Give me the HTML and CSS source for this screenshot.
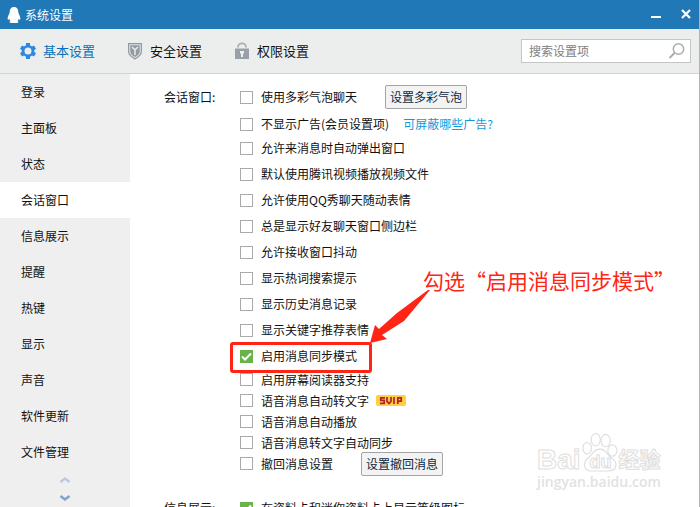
FILE: index.html
```html
<!DOCTYPE html>
<html lang="zh-CN">
<head>
<meta charset="utf-8">
<title>系统设置</title>
<link rel="stylesheet" href="styles.css">
</head>
<body>
<div class="window">
  <header class="titlebar">
    <svg class="penguin" width="14" height="18" viewBox="0 0 14 18"><path fill="#fff" d="M7 1C4 1 2.700 3 2.700 6C2.700 8 .6 10 .6 12.500C.6 14 1.500 14 2.300 12.800C2.500 14 3 14.600 3.500 15C2 15.500 2.300 17 4.500 17H9.500C11.700 17 12 15.500 10.500 15C11 14.600 11.500 14 11.700 12.800C12.500 14 13.400 14 13.400 12.500C13.400 10 11.300 8 11.300 6C11.300 3 10 1 7 1Z"/></svg>
    <h1>系统设置</h1>
    <div class="controls">
      <button type="button" aria-label="最小化"><svg width="10" height="12" viewBox="0 0 10 12"><path fill="#fff" d="M0 7h10v2H0z"/></svg></button>
      <button type="button" aria-label="关闭"><svg width="10" height="12" viewBox="0 0 10 12"><path stroke="#fff" stroke-width="2.200" d="M1 1l8 8M9 1l-8 8"/></svg></button>
    </div>
  </header>
  <nav class="toolbar">
    <a class="tab current" href="#basic"><svg width="18" height="18" viewBox="0 0 18 18"><path fill="#2b87e0" fill-rule="evenodd" d="M7 1h4v2.300l2 1.200 2-1 2 3.300-1.700 1.200v2l1.700 1.200-2 3.300-2-1-2 1.200V17H7v-2.300l-2-1.200-2 1-2-3.300L2.700 10V8L1 6.800l2-3.300 2 1 2-1.200zM9 5.500a3.500 3.500 0 1 0 0 7 3.500 3.500 0 0 0 0-7z"/></svg>基本设置</a>
    <a class="tab" href="#safety"><svg width="18" height="18" viewBox="0 0 18 18"><path fill="#dfe2e4" stroke="#939ba2" stroke-width="1.200" d="M2.600 1.600h12.800v8c0 3.200-3.200 5.600-6.400 7.300-3.200-1.700-6.400-4.100-6.400-7.300z"/><path fill="#939ba2" d="M4.300 3.200h9.400v6.200c0 2.500-2.300 4.200-4.700 5.500-2.400-1.300-4.700-3-4.700-5.500z"/><path stroke="#e5e8ea" stroke-width="1.600" fill="none" d="M6 5l3 2.800L12 5M9 7.500V13"/></svg>安全设置</a>
    <a class="tab" href="#rights"><svg width="18" height="18" viewBox="0 0 18 18"><path fill="none" stroke="#a9afb5" stroke-width="1.700" d="M5 5.500V5.300a4 4 0 0 1 8 0v.2"/><path fill="#98a1a9" d="M2 6.500h14V17H2z"/><path fill="#eef0f0" d="M7 9h4v2.500h-1V15H8v-3.500H7z"/></svg>权限设置</a>
    <form class="search" role="search">
      <input type="text" aria-label="搜索设置项" placeholder="搜索设置项">
      <button type="button" aria-label="搜索"><svg width="18" height="18" viewBox="0 0 18 18"><circle cx="10.500" cy="7" r="5.200" fill="none" stroke="#acacac" stroke-width="1.500"/><path stroke="#acacac" stroke-width="2" d="M6.500 11l-5 5"/></svg></button>
    </form>
  </nav>
  <div class="body">
    <aside class="sidebar">
      <a href="#login">登录</a>
      <a href="#panel">主面板</a>
      <a href="#status">状态</a>
      <a class="active" href="#chat">会话窗口</a>
      <a href="#info">信息展示</a>
      <a href="#remind">提醒</a>
      <a href="#hotkey">热键</a>
      <a href="#display">显示</a>
      <a href="#sound">声音</a>
      <a href="#update">软件更新</a>
      <a href="#files">文件管理</a>
      <div class="scrollers">
        <button type="button" aria-label="向上"><svg width="12" height="8" viewBox="0 0 12 8"><path fill="none" stroke="#b9cae2" stroke-width="2.400" d="M1.500 6L6 2.500 10.500 6"/></svg></button>
        <button type="button" aria-label="向下"><svg width="12" height="8" viewBox="0 0 12 8"><path fill="none" stroke="#7ea3d2" stroke-width="2.400" d="M1.500 2L6 5.500 10.500 2"/></svg></button>
      </div>
    </aside>
    <main class="content">
      <section class="group">
        <h2>会话窗口:</h2>
        <div class="options">
          <div class="row first"><label><input type="checkbox">使用多彩气泡聊天</label><button class="button" type="button">设置多彩气泡</button></div>
          <div class="row second"><label><input type="checkbox">不显示广告(会员设置项)</label><a class="link" href="#ads">可屏蔽哪些广告?</a></div>
          <div class="row"><label><input type="checkbox">允许来消息时自动弹出窗口</label></div>
          <div class="row"><label><input type="checkbox">默认使用腾讯视频播放视频文件</label></div>
          <div class="row"><label><input type="checkbox">允许使用QQ秀聊天随动表情</label></div>
          <div class="row"><label><input type="checkbox">总是显示好友聊天窗口侧边栏</label></div>
          <div class="row"><label><input type="checkbox">允许接收窗口抖动</label></div>
          <div class="row"><label><input type="checkbox">显示热词搜索提示</label></div>
          <div class="row"><label><input type="checkbox">显示历史消息记录</label></div>
          <div class="row"><label><input type="checkbox">显示关键字推荐表情</label></div>
          <div class="row marked"><label><input type="checkbox" checked>启用消息同步模式</label>
            <div class="mark"></div>
            <svg class="arrow" width="62" height="56" viewBox="0 0 62 56"><path fill="#ff2414" d="M61 2L59 2 28 25 10 41 6 37 1 55 18 51 13 47 35 33Z"/></svg>
            <p class="note">勾选“启用消息同步模式”</p>
          </div>
          <div class="row tight"><label><input type="checkbox">启用屏幕阅读器支持</label></div>
          <div class="row tight"><label><input type="checkbox">语音消息自动转文字</label><svg class="svip" width="30" height="11" viewBox="0 0 30 11" role="img" aria-label="SVIP"><rect width="30" height="11" rx="2" fill="#ffd040"/><path fill="none" stroke="#b5202b" stroke-width="1.700" d="M9 2.800H4.800v2.500h3.400v3H4M11 2v4.300l2 2.200 2-2.200V2M18 2v7M21.800 9V2.800h3.400v3.400h-3.400"/></svg></div>
          <div class="row tight"><label><input type="checkbox">语音消息自动播放</label></div>
          <div class="row tight"><label><input type="checkbox">语音消息转文字自动同步</label></div>
          <div class="row tight"><label><input type="checkbox">撤回消息设置</label><button class="button" type="button">设置撤回消息</button></div>
        </div>
      </section>
      <section class="group">
        <h2>信息展示:</h2>
        <div class="options">
          <div class="row second"><label><input type="checkbox" checked>在资料卡和迷你资料卡上显示等级图标</label></div>
        </div>
      </section>
    </main>
  </div>
  <div class="watermark" aria-hidden="true">
    <div class="brand"><span>Bai</span><span class="paw"><svg width="38" height="42" viewBox="0 0 40 42"><g fill="#fff" stroke="#dedede" stroke-width="1.200"><ellipse cx="6.500" cy="17" rx="4.500" ry="6"/><ellipse cx="15.500" cy="8" rx="4.800" ry="6.500"/><ellipse cx="26" cy="9" rx="4.800" ry="6.500"/><ellipse cx="33" cy="19.500" rx="4.800" ry="6"/><path d="M20 18C13 18 12 24 8 27C1 32 3 41 11 41H29C38 41 39 32 33 28C28 25 27 18 20 18Z"/></g></svg><b>du</b></span><span class="cn">经验</span></div>
    <div class="site">jingyan.baidu.com</div>
  </div>
</div>
</body>
</html>
```
FILE: styles.css
```css
* {
  box-sizing: border-box;
}

body {
  margin: 0;
  font: 12px/18px "Noto Sans CJK SC", sans-serif;
  color: #111;
}

h1, h2, p {
  margin: 0;
  font-size: 12px;
  font-weight: 400;
}

a {
  color: inherit;
  text-decoration: none;
}

button, input {
  font: inherit;
  margin: 0;
}

button {
  padding: 0;
  border: 0;
  background: none;
}

svg {
  display: block;
  flex: none;
}

.window {
  position: relative;
  display: flex;
  flex-direction: column;
  height: 100vh;
  overflow: hidden;
  background: #fff;
  border-right: 1px solid #b4b4b4;
}

.titlebar {
  display: flex;
  flex: none;
  align-items: center;
  gap: 4px;
  height: 29px;
  padding: 0 8px 0 7px;
  background: #2078b7;
  color: #fff;
}

.controls {
  display: flex;
  gap: 20px;
  margin-left: auto;
}

.toolbar {
  display: flex;
  flex: none;
  align-items: center;
  gap: 31px;
  height: 45px;
  padding: 0 8px 0 19px;
  background: #eceeee;
  border-bottom: 1px solid #d3d5d5;
}

.tab {
  display: flex;
  align-items: center;
  gap: 6px;
  font-size: 13px;
}

.tab.current {
  color: #0870b8;
}

.search {
  display: flex;
  align-items: center;
  width: 170px;
  height: 24px;
  margin-left: auto;
  padding: 0 4px 0 7px;
  background: #fff;
  border: 1px solid #c4c6c6;
}

.search input {
  flex: 1;
  min-width: 0;
  padding: 0;
  border: 0;
  outline: 0;
}

.search input::placeholder {
  color: #808080;
}

.body {
  display: flex;
  flex: 1;
  min-height: 0;
}

.sidebar {
  display: flex;
  flex: none;
  flex-direction: column;
  width: 130px;
  background: #efefef;
}

.sidebar a {
  padding: 9px 21px;
}

.sidebar .active {
  background: #fff;
}

.scrollers {
  display: flex;
  flex-direction: column;
  align-items: center;
  gap: 10px;
  padding-top: 6px;
}

.content {
  flex: 1;
  min-width: 0;
  padding: 7px 0 0 34px;
}

.group {
  display: flex;
  margin-bottom: 23px;
}

.group h2 {
  width: 76px;
  padding-top: 7px;
}

.group + .group h2 {
  padding-top: 2px;
}

.row {
  position: relative;
  display: flex;
  align-items: center;
  height: 26px;
}

.row.first {
  height: 32px;
}

.row.second {
  height: 22px;
}

.row.tight {
  height: 21px;
}

.row label {
  display: flex;
  align-items: center;
  gap: 8px;
  white-space: nowrap;
}

.row input {
  appearance: none;
  width: 13px;
  height: 13px;
  background: #fff;
  border: 1px solid #aaa;
}

.row input:checked {
  border-color: #69b34b;
  background: #69b34b url("data:image/svg+xml,%3Csvg xmlns='http://www.w3.org/2000/svg' viewBox='0 0 11 11'%3E%3Cpath d='M1 5.500l3 3L10 2.500' fill='none' stroke='white' stroke-width='2'/%3E%3C/svg%3E");
}

.button {
  height: 24px;
  margin-left: 28px;
  padding: 0 4px;
  color: #0d2840;
  background: #f3f3f3;
  border: 1px solid #a4a4a4;
  border-radius: 2px;
}

.link {
  margin-left: 14px;
  color: #109adb;
}

.svip {
  margin-left: 7px;
}

.mark {
  position: absolute;
  top: -1px;
  left: -10px;
  width: 142px;
  height: 31px;
  border: 3px solid #ff2414;
  border-radius: 3px;
}

.arrow {
  position: absolute;
  left: 129px;
  bottom: 25px;
}

.note {
  position: absolute;
  left: 183px;
  bottom: 75px;
  font-size: 21px;
  line-height: 28px;
  color: #ff2414;
  white-space: nowrap;
}

.watermark {
  position: absolute;
  right: 36px;
  bottom: 16px;
  width: 126px;
  color: #fff;
  font-family: "Liberation Sans", "Noto Sans CJK SC", sans-serif;
  font-weight: 700;
  -webkit-text-stroke: 1px #dedede;
  pointer-events: none;
}

.brand {
  display: flex;
  align-items: flex-end;
  font-size: 28px;
  line-height: 26px;
}

.paw {
  position: relative;
}

.paw b {
  position: absolute;
  left: 9px;
  bottom: 1px;
  font-size: 18px;
  line-height: 20px;
}

.cn {
  font-size: 21px;
}

.site {
  font-family: "Open Sans", sans-serif;
  font-size: 14px;
  font-weight: 600;
  line-height: 18px;
  color: #e2e2e2;
  -webkit-text-stroke: 0;
}
```
